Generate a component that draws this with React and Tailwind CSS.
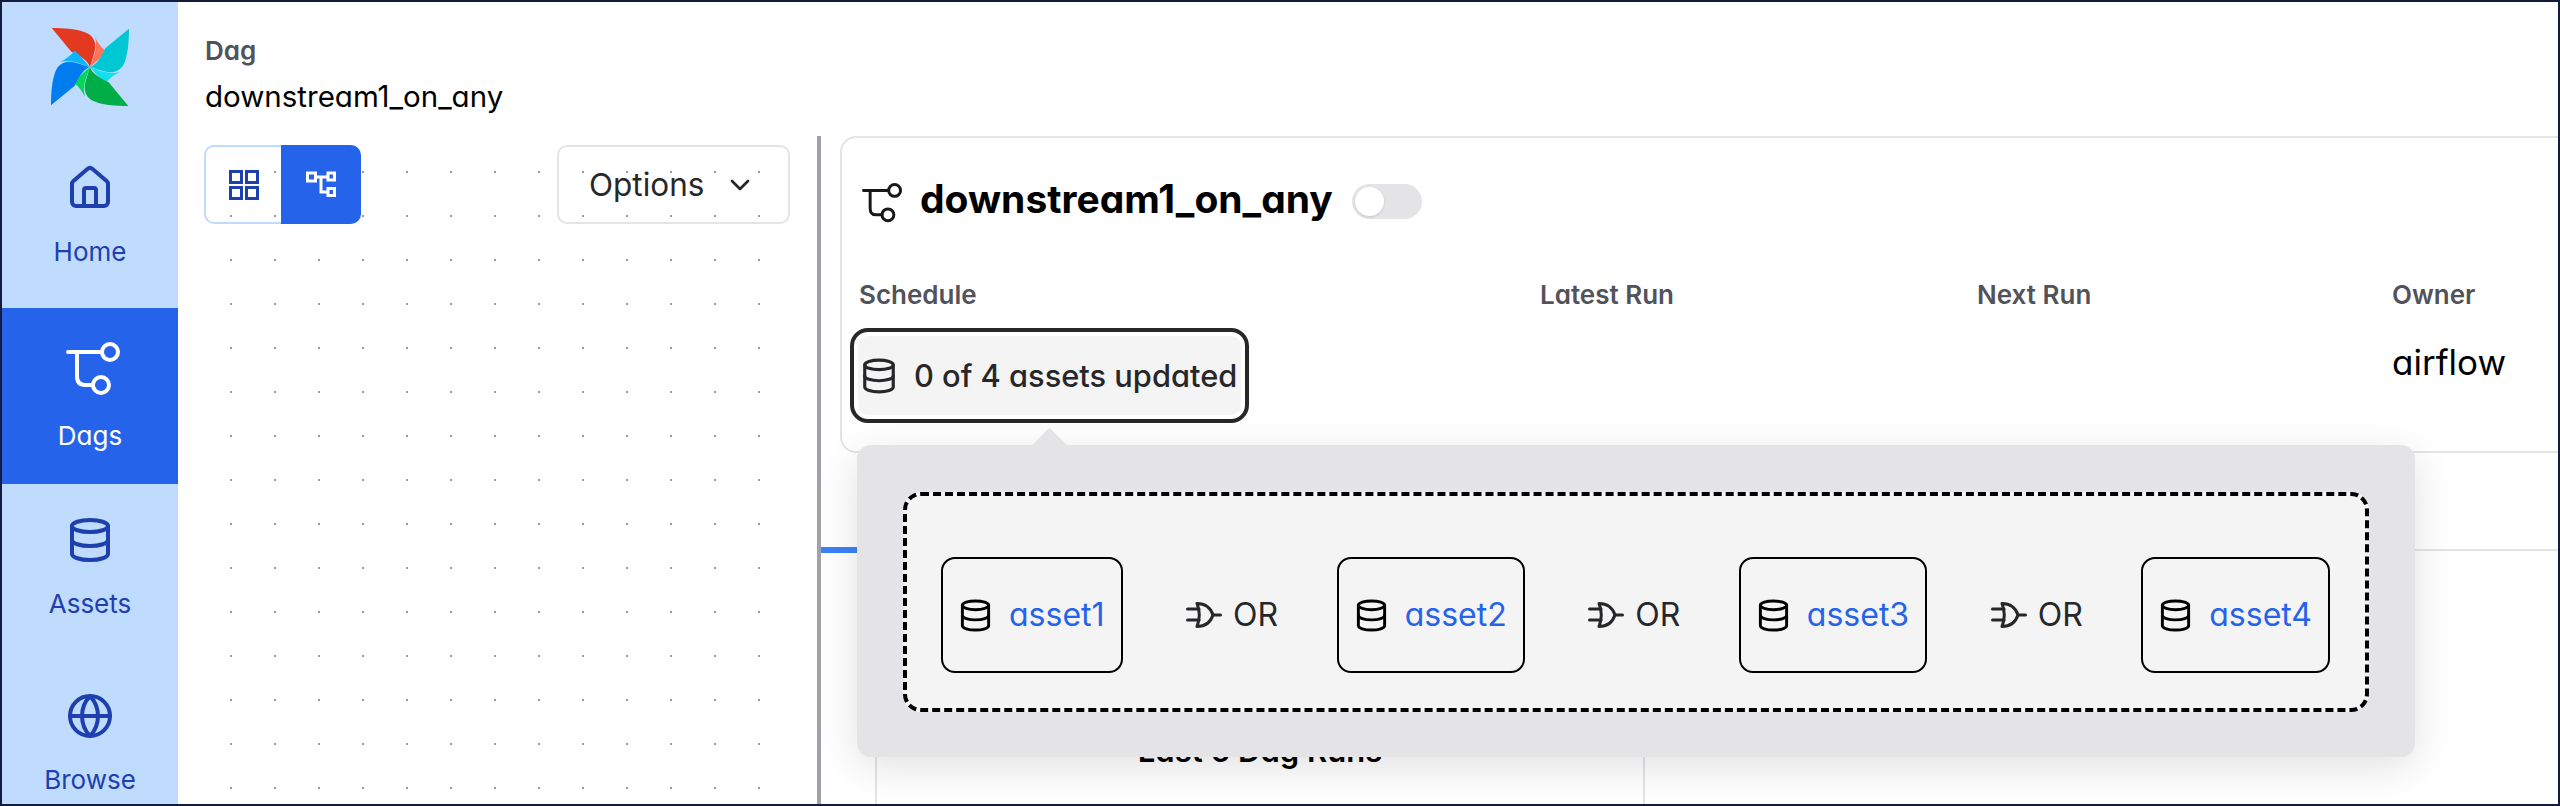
import React from "react";
import { ChevronDown, Database, Globe, House } from "lucide-react";

const blades = [
  { angle: 0, main: "#e43921", light: "#ff7557" },
  { angle: 90, main: "#00c7d4", light: "#11e1ee" },
  { angle: 180, main: "#00ad46", light: "#04d659" },
  { angle: 270, main: "#017cee", light: "#0cb6ff" },
];

const assets = ["asset1", "asset2", "asset3", "asset4"];

function Logo() {
  return (
    <svg width="78" height="78" viewBox="-115 -115 230 230">
      {blades.map((b) => (
        <g key={b.angle} transform={`rotate(${b.angle})`}>
          <path d="M-113 -115C-80 -115 -30 -112 -5 -98C15 -85 20 -65 12 -40C8 -25 3 -10 0 0C-3 -12 -20 -30 -55 -45Z" fill={b.main} />
          <path d="M15 -88C22 -75 30 -60 49 -45C30 -25 10 -10 0 0C6 -20 25 -55 15 -88Z" fill={b.light} />
        </g>
      ))}
    </svg>
  );
}

function DagIcon({ size = 54, className = "" }) {
  return (
    <svg width={size} height={size} viewBox="0 0 54 54" fill="none" stroke="currentColor" strokeWidth="4" strokeLinecap="round" className={className}>
      <path d="M2 10H36M11 10V34Q11 43 19 43H27" />
      <circle cx="44" cy="10" r="8" />
      <circle cx="35" cy="43" r="8" />
    </svg>
  );
}

function GridIcon() {
  return (
    <svg width="30" height="30" viewBox="0 0 30 30" fill="none" stroke="#1e40af" strokeWidth="3">
      <rect x="1.5" y="1.5" width="11" height="11" />
      <rect x="17.5" y="1.5" width="11" height="11" />
      <rect x="1.5" y="17.5" width="11" height="11" />
      <rect x="17.5" y="17.5" width="11" height="11" />
    </svg>
  );
}

function GraphIcon() {
  return (
    <svg width="30" height="27" viewBox="0 0 30 27" fill="none" stroke="white" strokeWidth="3">
      <rect x="1.5" y="2" width="8" height="8" />
      <rect x="22" y="2" width="6.5" height="7" />
      <rect x="22" y="17.5" width="6.5" height="7" />
      <path d="M9 6H22M15 6V21H22" />
    </svg>
  );
}

function OrIcon() {
  return (
    <svg width="36" height="26" viewBox="0 0 36 26" fill="none" stroke="#27272a" strokeWidth="3" strokeLinecap="round" strokeLinejoin="round">
      <path d="M1.5 7H13M1.5 18H13M27 13H34.5" />
      <path d="M11 1.5C20 1.5 25 7 27 13C25 19 20 24.5 11 24.5C14 17 14 9 11 1.5Z" />
    </svg>
  );
}

function NavItem({ icon, label, active }) {
  return (
    <div className={`flex h-[176px] shrink-0 flex-col items-center pt-[32px] ${active ? "bg-[#2563eb] text-white" : "text-[#1e40af]"}`}>
      <div className="flex min-h-[48px] items-center justify-center">{icon}</div>
      <div className="mt-[20px] text-[26px] leading-[40px]">{label}</div>
    </div>
  );
}

function AssetBox({ name }) {
  return (
    <div className="flex h-[116px] items-center gap-[16px] rounded-[14px] border-2 border-black pl-[15px] pr-[16px]">
      <Database size={35} strokeWidth={2} className="text-black" />
      <span className="text-[32px] text-[#2563eb]">{name}</span>
    </div>
  );
}

function OrLabel() {
  return (
    <div className="flex items-center gap-[11px] pl-[5px] text-[32px] text-[#27272a]">
      <OrIcon />
      <span>OR</span>
    </div>
  );
}

export default function App() {
  return (
    <div className="flex h-[806px] w-[2560px] overflow-hidden border-2 border-[#111c3f] bg-white font-['Inter',sans-serif] [font-feature-settings:'cv11']">
      <nav className="flex w-[176px] shrink-0 flex-col bg-[#bfdbfe]">
        <div className="flex h-[130px] shrink-0 items-start justify-center pt-[26px]">
          <Logo />
        </div>
        <NavItem icon={<House size={48} strokeWidth={2} />} label="Home" />
        <NavItem icon={<DagIcon size={54} className="ml-[6px] mt-[2px]" />} label="Dags" active />
        <NavItem icon={<Database size={48} strokeWidth={2} />} label="Assets" />
        <NavItem icon={<Globe size={48} strokeWidth={2} />} label="Browse" />
      </nav>

      <main className="flex min-w-0 flex-1 flex-col">
        <header className="h-[134px] shrink-0 pl-[27px] pt-[33px]">
          <div className="text-[26px] font-semibold leading-[32px] text-[#52525b]">Dag</div>
          <div className="mt-[11px] text-[29.5px] leading-[36px] text-black">downstream1_on_any</div>
        </header>

        <div className="flex min-h-0 flex-1">
          <div className="w-[639px] shrink-0 pl-[26px] pr-[27px]">
            <div className="flex h-full items-start justify-between bg-[radial-gradient(circle,#9a9aa2_1.2px,transparent_1.3px)] bg-[size:44px_44px] bg-[position:5px_14px] pt-[9px]">
              <div className="flex h-[79px]">
                <div className="flex w-[77px] items-center justify-center rounded-l-[10px] border-2 border-r-0 border-[#bfdbfe]">
                  <GridIcon />
                </div>
                <div className="flex w-[80px] items-center justify-center rounded-r-[10px] bg-[#2563eb]">
                  <GraphIcon />
                </div>
              </div>
              <div className="flex h-[79px] w-[233px] items-center justify-between rounded-[10px] border-2 border-[#e4e4e7] pl-[30px] pr-[32px] text-[31.5px] text-[#27272a]">
                <span>Options</span>
                <ChevronDown size={32} strokeWidth={2} />
              </div>
            </div>
          </div>

          <div className="w-[4px] shrink-0 bg-[#a1a1aa]" />

          <div className="relative min-w-0 flex-1">
            <section className="-mr-[20px] ml-[19px] h-[317px] rounded-[16px] border-2 border-[#e4e4e7] pl-[17px]">
              <div className="flex h-[82px] items-end gap-[18px]">
                <DagIcon size={40} className="-mb-[3px] ml-[3px] text-[#18181b]" />
                <h1 className="-mb-[1px] text-[39px] font-bold leading-[44px] text-black">downstream1_on_any</h1>
                <div className="mb-[1px] ml-[1px] flex h-[35px] w-[70px] items-center rounded-full bg-[#e4e4e7] pl-[3px]">
                  <div className="h-[29px] w-[29px] rounded-full bg-white shadow-sm" />
                </div>
              </div>
              <div className="mt-[59px] grid grid-cols-[681px_437px_415px_1fr] text-[26px] font-semibold leading-[32px] text-[#52525b]">
                <div>Schedule</div>
                <div>Latest Run</div>
                <div>Next Run</div>
                <div>Owner</div>
              </div>
              <div className="mt-[25px] grid grid-cols-[681px_437px_415px_1fr] items-start">
                <div className="-ml-[1px] flex h-[79px] w-[383px] items-center gap-[16px] rounded-[10px] bg-[#f4f4f5] pl-[2px] text-[30.8px] font-medium text-[#27272a] outline-[4px] outline-offset-[4px] outline-[#27272a]">
                  <Database size={38} strokeWidth={2} />
                  <span className="pt-[1px]">0 of 4 assets updated</span>
                </div>
                <div />
                <div />
                <div className="mt-[6px] text-[35px] leading-[40px] text-black">airflow</div>
              </div>
            </section>

            <div className="flex h-[98px] border-b-2 border-[#e4e4e7]">
              <div className="-mb-[4px] mt-auto h-[6px] w-[120px] bg-[#3b82f6]" />
            </div>

            <div className="ml-[54px] h-full w-[770px] border-x-2 border-[#e4e4e7] pt-[180px] text-center text-[31px] font-semibold leading-[40px] text-black">
              Last 6 Dag Runs
            </div>

            <div className="absolute left-[36px] top-[309px] h-[312px] w-[1558px] rounded-[14px] bg-[#e4e4e7] px-[46px] py-[47px] shadow-[0_10px_40px_rgba(0,0,0,0.12)]">
              <div className="absolute -top-[12px] left-[180px] h-[25px] w-[25px] rotate-45 bg-[#e4e4e7]" />
              <div className="relative flex h-[220px] items-center justify-between rounded-[18px] border-[4px] border-dashed border-black bg-[#f4f4f5] pl-[34px] pr-[35px] pt-[26px]">
                {assets.map((a, i) => (
                  <React.Fragment key={a}>
                    <AssetBox name={a} />
                    {i < assets.length - 1 && <OrLabel />}
                  </React.Fragment>
                ))}
              </div>
            </div>
          </div>
        </div>
      </main>
    </div>
  );
}
